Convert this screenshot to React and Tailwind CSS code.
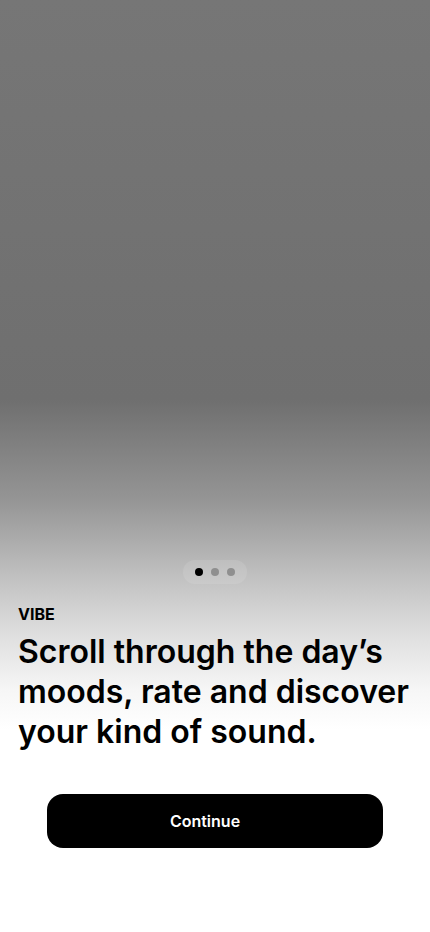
import React from 'react';

function PageDots({ count = 3, active = 0 }) {
    return (
        <div className="mx-auto flex h-6 items-center gap-2 rounded-full bg-white/10 px-3">
            {Array.from({ length: count }).map((_, i) => (
                <span
                    key={i}
                    className={i === active ? 'h-2 w-2 rounded-full bg-black' : 'h-2 w-2 rounded-full bg-[#8f8f8f]'}
                />
            ))}
        </div>
    );
}

export default function App() {
    return (
        <div
            className="flex min-h-[932px] w-full flex-col justify-end bg-[linear-gradient(to_bottom,#767676_0px,#6f6f6f_400px,#959595_500px,#c4c4c4_583px,#dedede_633px,#f6f6f6_690px,#ffffff_730px)] pb-[84px] text-black"
            style={{ fontFamily: 'Inter, "Noto Sans", sans-serif' }}
        >
            <PageDots count={3} active={0} />
            <div className="mt-5 px-[18px]">
                <p className="text-base leading-5 font-bold">VIBE</p>
                <h1 className="mt-2 text-[32px] leading-10 font-semibold">
                    Scroll through the day’s moods, rate and discover your kind of sound.
                </h1>
            </div>
            {/* label sits a bit left of centre, like the original */}
            <button className="mx-[47px] mt-[42px] h-[54px] rounded-2xl bg-black pr-5 text-base font-semibold text-white">
                Continue
            </button>
        </div>
    );
}
